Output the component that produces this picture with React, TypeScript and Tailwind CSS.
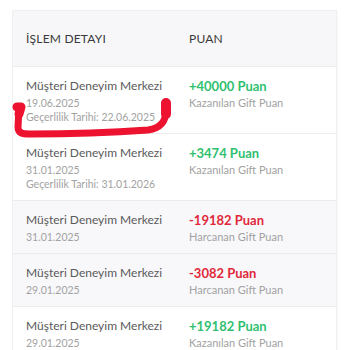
const rows = [
  { name: 'Müşteri Deneyim Merkezi', date: '19.06.2025', until: '22.06.2025', points: '+40000 Puan', kind: 'earn', shaded: false },
  { name: 'Müşteri Deneyim Merkezi', date: '31.01.2025', until: '31.01.2026', points: '+3474 Puan', kind: 'earn', shaded: false },
  { name: 'Müşteri Deneyim Merkezi', date: '31.01.2025', points: '-19182 Puan', kind: 'spend', shaded: true },
  { name: 'Müşteri Deneyim Merkezi', date: '29.01.2025', points: '-3082 Puan', kind: 'spend', shaded: true },
  { name: 'Müşteri Deneyim Merkezi', date: '29.01.2025', points: '+19182 Puan', kind: 'earn', shaded: false },
]

export default function App() {
  return (
    <div className="relative w-[350px] h-[350px] overflow-hidden bg-white font-['Lato',sans-serif]">
      <div className="ml-[12px] mt-[10px] w-[325px] border border-[#f0f0f2] border-b-0 shadow-[1px_0_2px_rgba(0,0,0,0.03)]">
        {/* Header */}
        <div className="grid grid-cols-[176px_1fr] h-[56px] items-center bg-[#f7f7f9] border-b border-[#ececee] text-[12px] text-[#3a3a3a] tracking-[0.2px]">
          <span className="pl-[13px]">İŞLEM DETAYI</span>
          <span>PUAN</span>
        </div>

        {rows.map((r, i) => (
          <div
            key={i}
            className={`grid grid-cols-[176px_1fr] py-[9px] border-b border-[#ececee] ${r.shaded ? 'bg-[#f8f8fa]' : 'bg-white'}`}
          >
            <div className="pl-[13px]">
              <div className="text-[12px] leading-[20px] text-[#5a5a5a]">{r.name}</div>
              <div className="text-[10.5px] leading-[14px] text-[#a2a2a2]">{r.date}</div>
              {r.until && (
                <div className="text-[10.5px] leading-[14px] text-[#a2a2a2]">Geçerlilik Tarihi: {r.until}</div>
              )}
            </div>
            <div>
              <div className={`text-[13px] leading-[20px] font-bold ${r.kind === 'earn' ? 'text-[#2fbf6f]' : 'text-[#e0283a]'}`}>
                {r.points}
              </div>
              <div className="text-[11px] leading-[14px] text-[#a2a2a2]">
                {r.kind === 'earn' ? 'Kazanılan Gift Puan' : 'Harcanan Gift Puan'}
              </div>
            </div>
          </div>
        ))}
      </div>

      {/* hand-drawn highlight */}
      <svg className="absolute left-0 top-0 pointer-events-none" width="350" height="350" viewBox="0 0 350 350">
        <g fill="none" stroke="#ec1230" strokeLinecap="round" strokeLinejoin="round">
          <path
            d="M19 108 L18 127 C18 133, 22 134, 30 134 C70 134, 120 132, 148 130 C162 128, 166 120, 166 110 L166 104"
            strokeWidth="7"
          />
          <path d="M17 107 L21 107 L19 114" strokeWidth="9" />
          <path d="M166 103 L166 114" strokeWidth="10" />
        </g>
      </svg>
    </div>
  )
}
